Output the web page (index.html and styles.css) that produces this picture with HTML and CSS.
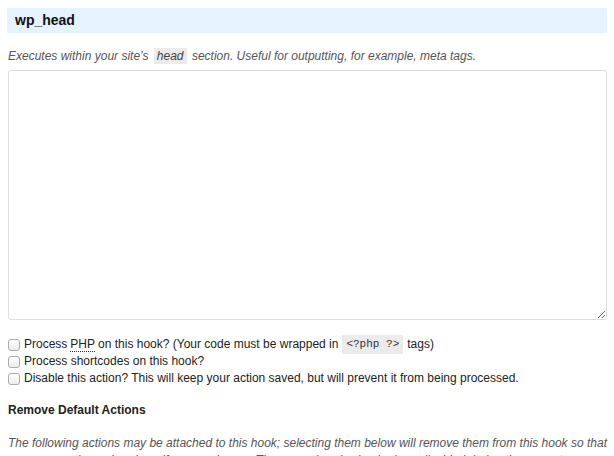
FILE: index.html
```html
<!DOCTYPE html>
<html>
<head>
<meta charset="utf-8">
<link rel="stylesheet" href="styles.css">
</head>
<body>
<div class="page">
  <h2 class="hook-title">wp_head</h2>
  <p class="desc">Executes within your site’s <code class="code">head</code> section. Useful for outputting, for example, meta tags.</p>
  <div class="editor-wrap"><textarea class="editor"></textarea></div>
  <div class="options">
    <label class="opt"><input type="checkbox" class="cb"> Process <abbr class="abbr" title="PHP: Hypertext Preprocessor">PHP</abbr> on this hook? (Your code must be wrapped in <code class="code-php">&lt;?php ?&gt;</code> tags)</label>
    <label class="opt"><input type="checkbox" class="cb"> Process shortcodes on this hook?</label>
    <label class="opt"><input type="checkbox" class="cb"> Disable this action? This will keep your action saved, but will prevent it from being processed.</label>
  </div>
  <h3 class="sub-title">Remove Default Actions</h3>
  <p class="desc desc-long">The following actions may be attached to this hook; selecting them below will remove them from this hook so that you can run them elsewhere if you so choose. The ones already checked are disabled during the current request.</p>
</div>
</body>
</html>
```
FILE: styles.css
```css
html, body {
  margin: 0;
  padding: 0;
  background: #fff;
}
body {
  font-family: "Liberation Sans", Arial, Helvetica, sans-serif;
  color: #222;
  font-size: 12px;
}
.page {
  padding: 8px 7px 0 7px;
  width: 600px;
}
.hook-title {
  margin: 0;
  background: #e5f3fe;
  height: 25px;
  line-height: 25px;
  padding: 0 8px;
  font-size: 14px;
  font-weight: bold;
  color: #111;
}
.desc {
  margin: 15px 0 0 1px;
  font-style: italic;
  color: #555;
  font-size: 12px;
  line-height: 17px;
}
.code {
  font-family: "Liberation Sans", Arial, sans-serif;
  font-size: 12px;
  background: #ebebeb;
  padding: 1px 3px;
  margin: 0 2px;
  font-style: italic;
  color: #444;
}
.code-php {
  font-family: "Liberation Mono", monospace;
  font-size: 11px;
  background: #ebebeb;
  margin: 0 4px;
  padding: 1px 4px;
  color: #333;
  white-space: pre;
}
.editor-wrap {
  margin: 5px 0 0 1px;
  display: flex;
}
.editor {
  flex: 1;
  height: 250px;
  box-sizing: border-box;
  border: 1px solid #ddd;
  border-radius: 3px;
  background: #fff;
  margin: 0;
  resize: vertical;
}
.options {
  margin: 16px 0 0 1px;
  display: flex;
  flex-direction: column;
}
.opt {
  display: flex;
  align-items: center;
  line-height: 17px;
  height: 17px;
  color: #222;
  white-space: nowrap;
}
.cb {
  width: 12px;
  height: 12px;
  margin: 1px 4px 0 0;
  appearance: none;
  -webkit-appearance: none;
  border: 1px solid #aaa;
  border-radius: 3px;
  background: linear-gradient(#fff, #ececec);
  box-sizing: border-box;
  flex: none;
}
.abbr {
  text-decoration: none;
  border-bottom: 1px dotted #333;
  line-height: 13px;
  margin: 0 3px;
}
.sub-title {
  margin: 16px 0 0 1px;
  font-size: 12px;
  font-weight: bold;
  line-height: 15px;
  color: #222;
}
.desc-long {
  margin-top: 17px;
}
```
